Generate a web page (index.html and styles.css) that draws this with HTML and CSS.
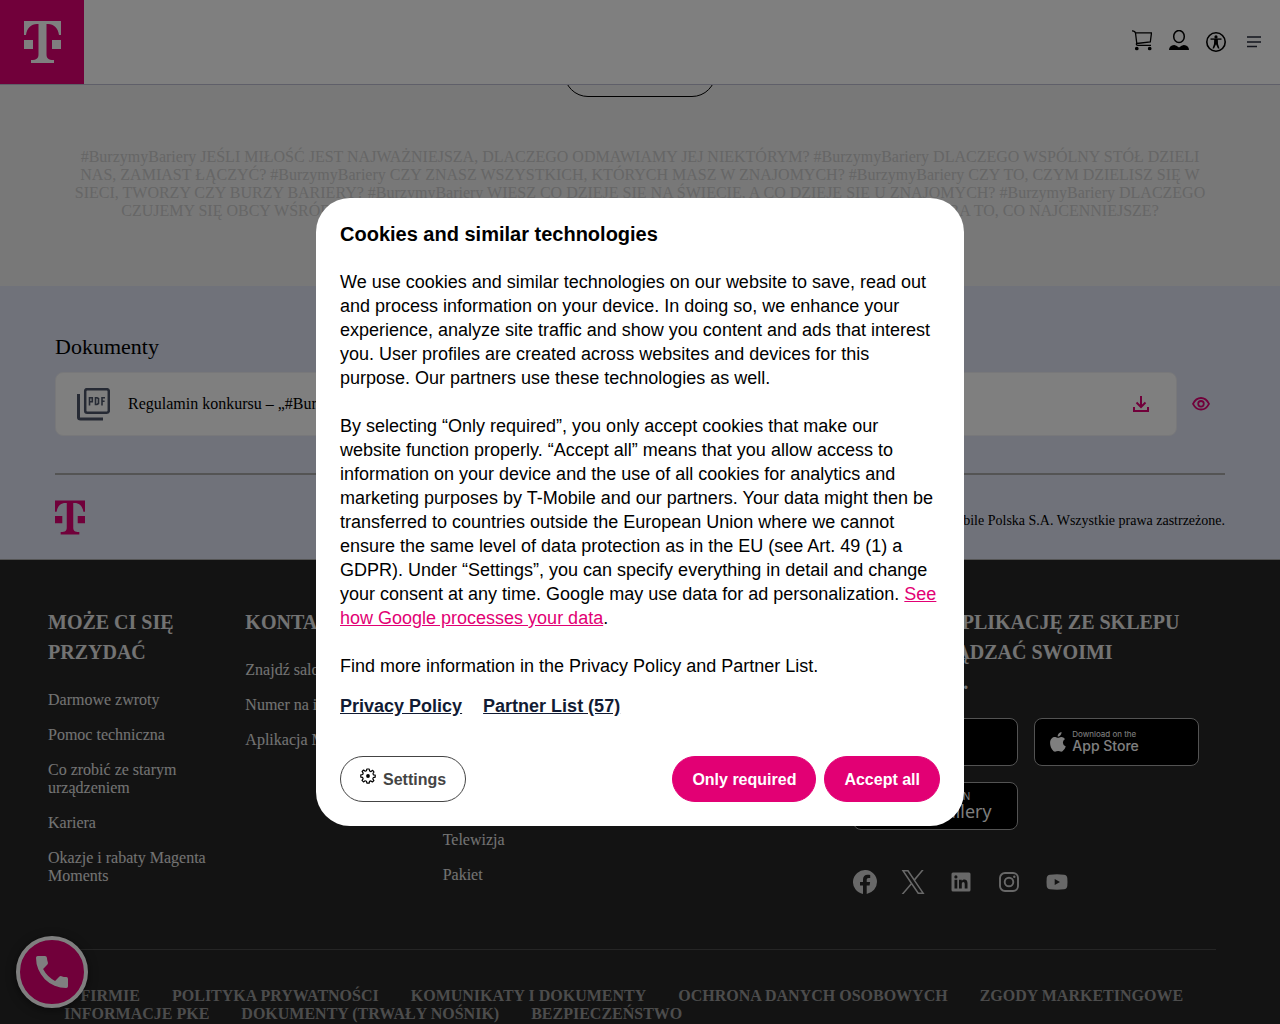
FILE: index.html
```
<!DOCTYPE html>
<html lang="pl">
<head>
<meta charset="utf-8">
<meta name="viewport" content="width=device-width, initial-scale=1">
<title>Burzymy Bariery | T-Mobile</title>
<link rel="stylesheet" href="styles.css">
</head>
<body>
<svg class="sprite" aria-hidden="true">
  <symbol id="t-logo" viewBox="0 0 37 42">
    <path d="M0 0H37V14H35C34 7 30 3 24 3H22.500V33C22.500 37 24 39 30 39V42H7V39C13 39 14.500 37 14.500 33V3H13C7 3 3 7 2 14H0ZM0 19H9V28H0ZM28 19H37V28H28Z"/>
  </symbol>
</svg>

<header class="header">
  <a class="brand" href="#" aria-label="T-Mobile"><svg class="brand-logo"><use href="#t-logo"/></svg></a>
  <nav class="tools" aria-label="Menu">
    <a class="tool" href="#" aria-label="Koszyk">
      <svg width="20" height="24" viewBox="0 0 20 24" fill="none" stroke="#000" stroke-width="1.300"><path d="M0 .9Q3 .8 3.500 3L4.800 13.500M3.400 2.900H19.500L18.300 12L4.700 13.500M4.500 13.500Q4 15.300 6 15.300H19"/><circle cx="4.800" cy="18.500" r="1.200" fill="#000"/><circle cx="17.700" cy="18.500" r="1.200" fill="#000"/></svg>
    </a>
    <a class="tool" href="#" aria-label="Konto">
      <svg width="20" height="24" viewBox="0 0 20 24"><ellipse cx="10" cy="6.500" rx="5.300" ry="6" fill="none" stroke="#000" stroke-width="1.500"/><path d="M0 20C0 17 2 15.300 5 15Q7 14.800 10 17.500Q13 14.800 15 15C18 15.300 20 17 20 20Z"/></svg>
    </a>
    <a class="tool" href="#" aria-label="Dostępność">
      <svg width="20" height="20" viewBox="0 0 20 20"><circle cx="10" cy="10" r="9.200" fill="none" stroke="#000" stroke-width="1.600"/><circle cx="10" cy="4.900" r="1.600"/><path d="M4.500 7.100H15.500" stroke="#000" stroke-width="1.400"/><path d="M8.200 7H11.800L12 12L13.500 16.500H12L10 12.300L8 16.500H6.500L8 12Z"/></svg>
    </a>
    <button class="tool tool-menu" type="button" aria-label="Otwórz menu">
      <svg width="14" height="12" viewBox="0 0 14 12" fill="none" stroke="#262a3a" stroke-width="1.600"><path d="M0 1H14M0 6H14M0 10.500H10"/></svg>
    </button>
  </nav>
</header>

<main>
  <section class="campaign">
    <a class="campaign-button" href="#">Dowiedz się</a>
    <p class="campaign-text">#BurzymyBariery JEŚLI MIŁOŚĆ JEST NAJWAŻNIEJSZA, DLACZEGO ODMAWIAMY JEJ NIEKTÓRYM? #BurzymyBariery DLACZEGO WSPÓLNY STÓŁ DZIELI NAS, ZAMIAST ŁĄCZYĆ? #BurzymyBariery CZY ZNASZ WSZYSTKICH, KTÓRYCH MASZ W ZNAJOMYCH? #BurzymyBariery CZY TO, CZYM DZIELISZ SIĘ W SIECI, TWORZY CZY BURZY BARIERY? #BurzymyBariery WIESZ CO DZIEJE SIĘ NA ŚWIECIE, A CO DZIEJE SIĘ U ZNAJOMYCH? #BurzymyBariery DLACZEGO CZUJEMY SIĘ OBCY WŚRÓD SWOICH? #BurzymyBariery DLACZEGO CODZIENNY POŚPIECH CZĘSTO NAM ZABIERA TO, CO NAJCENNIEJSZE?</p>
  </section>

  <section class="docs">
    <h2 class="docs-title">Dokumenty</h2>
    <div class="doc-row">
      <a class="doc" href="#">
        <svg width="33" height="33" viewBox="0 0 33 33" fill="none" stroke="#4c5468"><rect x="8.200" y="1.200" width="23.600" height="23.600" rx="2" stroke-width="2.500"/><path d="M1.500 6V29.500Q1.500 31 3.500 31H26" stroke-width="3"/><path d="M12.500 17.500V9.800H15.300V13.800H12.500M18.500 9.800V16.500H20L21.500 15.500V10.500L20 9.800ZM25 17.500V9.800H28M25 13.300H27.600" stroke-width="1.600"/></svg>
        <span class="doc-name">Regulamin konkursu – „#BurzymyBariery”</span>
        <svg width="16" height="16" viewBox="0 0 16 16" fill="none" stroke="#e20074" stroke-width="2"><path d="M8 0V10M3.500 6.500L8 11L12.500 6.500M1 11V15H15V11"/></svg>
      </a>
      <a class="doc-preview" href="#" aria-label="Podgląd">
        <svg width="18" height="14" viewBox="0 0 18 14" fill="none" stroke="#e20074" stroke-width="1.800"><path d="M1 6.800Q4 1 9 1T17 6.800Q14 12.500 9 12.500T1 6.800Z"/><circle cx="9" cy="6.800" r="2.800"/></svg>
      </a>
    </div>
    <div class="docs-foot">
      <svg class="docs-logo" role="img" aria-label="T-Mobile"><use href="#t-logo"/></svg>
      <span class="copyright">© T-Mobile Polska S.A. Wszystkie prawa zastrzeżone.</span>
    </div>
  </section>
</main>

<footer class="footer">
  <div class="footer-grid">
    <section>
      <h3 class="footer-title">MOŻE CI SIĘ PRZYDAĆ</h3>
      <ul class="footer-links">
        <li><a href="#">Darmowe zwroty</a></li>
        <li><a href="#">Pomoc techniczna</a></li>
        <li><a href="#">Co zrobić ze starym urządzeniem</a></li>
        <li><a href="#">Kariera</a></li>
        <li><a href="#">Okazje i rabaty Magenta Moments</a></li>
      </ul>
    </section>
    <section>
      <h3 class="footer-title">KONTAKT</h3>
      <ul class="footer-links">
        <li><a href="#">Znajdź salon</a></li>
        <li><a href="#">Numer na infolinię</a></li>
        <li><a href="#">Aplikacja Mój T-Mobile</a></li>
      </ul>
    </section>
    <section>
      <h3 class="footer-title">OFERTA DLA CIEBIE</h3>
      <ul class="footer-links">
        <li><a href="#">Abonament</a></li>
        <li><a href="#">Na kartę</a></li>
        <li><a href="#">Internet</a></li>
        <li><a href="#">Urządzenia</a></li>
        <li><a href="#">Telewizja</a></li>
        <li><a href="#">Pakiet</a></li>
      </ul>
    </section>
    <section class="apps">
      <h3 class="footer-title apps-title">POBIERZ APLIKACJĘ ZE SKLEPU ABY ZARZĄDZAĆ SWOIMI USŁUGAMI.</h3>
      <div class="stores">
        <a class="store store-google" href="#">
          <svg width="18" height="20" viewBox="0 0 18 20" fill="#fff"><path d="M1 0L18 10L1 20Z"/></svg>
          <span class="store-text"><small>GET IT ON</small><b>Google Play</b></span>
        </a>
        <a class="store" href="#">
          <svg width="16" height="20" viewBox="0 0 16 20" fill="#fff"><path d="M11.500 0C11.700 2.500 9.800 4.700 7.700 4.600C7.500 2.300 9.500.2 11.500 0ZM15 7Q12.700 8.500 12.900 10.800Q13 13.500 15.800 14.500Q14.500 18 12.500 19.300Q11.300 20 9.800 19.300Q8.200 18.600 6.500 19.300Q4.800 20 3.600 19.200C1 17 .1 13.500.1 11C.1 5.800 4 4.400 6 5.200Q8 6 8.700 5.800Q12.500 3.900 15 7Z"/></svg>
          <span class="store-text"><small>Download on the</small><b>App Store</b></span>
        </a>
        <a class="store store-huawei" href="#">
          <svg width="20" height="24" viewBox="0 0 20 24"><rect y="2" width="20" height="20" rx="5" fill="#e20074"/><path d="M6 8Q10 14 14 8" fill="none" stroke="#fff"/></svg>
          <span class="store-text"><small>EXPLORE IT ON</small><b>AppGallery</b></span>
        </a>
      </div>
      <div class="social">
        <a href="#" aria-label="Facebook"><svg viewBox="0 0 24 24"><path d="M24 12a12 12 0 1 0-14 11.900V15.500H7V12h3V9.400c0-3 1.800-4.700 4.500-4.700 1.300 0 2.700.2 2.700.2v3h-1.500c-1.500 0-2 .9-2 1.900V12h3.400l-.5 3.500h-2.900v8.400A12 12 0 0 0 24 12Z"/></svg></a>
        <a href="#" aria-label="X"><svg viewBox="0 0 24 24"><path d="M14.200 10.200 22.700 0h-2L13.300 8.800 7.400 0H.6l9 13.400L.6 24h2l7.900-9.300L16.800 24h6.800ZM3.400 1.500h3.100l14.300 21h-3.100Z"/></svg></a>
        <a href="#" aria-label="LinkedIn"><svg viewBox="0 0 24 24"><path d="M4 2.500H20Q21.500 2.500 21.500 4V20Q21.500 21.500 20 21.500H4Q2.500 21.500 2.500 20V4Q2.500 2.500 4 2.500ZM5.500 9.700V18.500H8.300V9.700ZM6.900 5.300A1.600 1.600 0 1 0 6.900 8.500A1.600 1.600 0 1 0 6.900 5.300ZM10 9.700V18.500H12.800V14C12.800 11.300 15.700 11.300 15.700 14V18.500H18.500V13C18.500 9 14.400 8.600 12.800 10.900V9.700Z" fill-rule="evenodd"/></svg></a>
        <a href="#" aria-label="Instagram"><svg viewBox="0 0 24 24"><rect x="3" y="3" width="18" height="18" rx="5" fill="none" stroke="currentColor" stroke-width="1.900"/><circle cx="12" cy="12" r="4.300" fill="none" stroke="currentColor" stroke-width="1.900"/><circle cx="17.300" cy="6.800" r="1.200"/></svg></a>
        <a href="#" aria-label="YouTube"><svg viewBox="0 0 24 24"><path d="M5 4.700Q12 4 19 4.700Q22 5 22.300 8Q22.700 12 22.300 16Q22 19 19 19.300Q12 20 5 19.300Q2 19 1.700 16Q1.300 12 1.700 8Q2 5 5 4.700ZM9.700 9V15L15 12Z" fill-rule="evenodd"/></svg></a>
      </div>
    </section>
  </div>
  <nav class="legal" aria-label="Informacje">
    <a href="#">O FIRMIE</a>
    <a href="#">POLITYKA PRYWATNOŚCI</a>
    <a href="#">KOMUNIKATY I DOKUMENTY</a>
    <a href="#">OCHRONA DANYCH OSOBOWYCH</a>
    <a href="#">ZGODY MARKETINGOWE</a>
    <a href="#">INFORMACJE PKE</a>
    <a href="#">DOKUMENTY (TRWAŁY NOŚNIK)</a>
    <a href="#">BEZPIECZEŃSTWO</a>
  </nav>
</footer>

<button class="call" type="button" aria-label="Zadzwoń">
  <svg width="32" height="32" viewBox="0 0 32 32" fill="#fff"><path d="M1.800 0H9Q10.700 0 10.900 1.700Q11.100 4.500 11.900 6.500Q12.200 7.800 11.200 8.800L7.100 13Q11.300 21 19.100 24.900L23.200 20.800Q24.200 19.800 25.500 20.200Q27.700 21 30.300 21.100Q32 21.300 32 23V30.200Q32 32 30.200 32A30.200 30.200 0 0 1 0 1.800Q0 0 1.800 0Z"/></svg>
</button>

<div class="overlay">
  <div class="dialog" role="dialog" aria-modal="true" aria-labelledby="consent-title" lang="en">
    <h1 class="dialog-title" id="consent-title">Cookies and similar technologies</h1>
    <p>We use cookies and similar technologies on our website to save, read out and process information on your device. In doing so, we enhance your experience, analyze site traffic and show you content and ads that interest you. User profiles are created across websites and devices for this purpose. Our partners use these technologies as well.</p>
    <p>By selecting “Only required”, you only accept cookies that make our website function properly. “Accept all” means that you allow access to information on your device and the use of all cookies for analytics and marketing purposes by T-Mobile and our partners. Your data might then be transferred to countries outside the European Union where we cannot ensure the same level of data protection as in the EU (see Art. 49 (1) a GDPR). Under “Settings”, you can specify everything in detail and change your consent at any time. Google may use data for ad personalization. <a class="inline-link" href="#">See how Google processes your data</a>.</p>
    <p>Find more information in the Privacy Policy and Partner List.</p>
    <div class="dialog-links">
      <a href="#">Privacy Policy</a>
      <a href="#">Partner List (57)</a>
    </div>
    <div class="actions">
      <button class="btn btn-outline" type="button">
        <svg width="16" height="16" viewBox="0 0 16 16"><path d="M6.800 1H9.200L9.600 3L11 3.600L12.700 2.300L14 4L13 5.400L13.400 6.800L15.200 7V9.200L13.300 9.600L12.800 10.900L13.900 12.500L12.400 14L10.900 12.900L9.500 13.400L9.200 15.200H6.900L6.500 13.300L5.100 12.800L3.500 13.900L2 12.400L3.100 10.800L2.600 9.400L.8 9.100V6.900L2.700 6.500L3.200 5.100L2.100 3.500L3.600 2L5.200 3.200L6.500 2.700Z" fill="none" stroke="#000" stroke-width="1.200" stroke-linejoin="round"/><circle cx="8" cy="8" r="1.900"/></svg>
        Settings
      </button>
      <button class="btn btn-primary" type="button">Only required</button>
      <button class="btn btn-primary" type="button">Accept all</button>
    </div>
  </div>
</div>
</body>
</html>
```
FILE: styles.css
```
* { box-sizing: border-box; }

body {
  margin: 0;
  font: 16px/18px "Liberation Serif", "Times New Roman", serif;
  color: #000;
  background: #262626;
}

h1, h2, h3, p, ul { margin: 0; padding: 0; }
a { color: inherit; text-decoration: none; }
svg { display: block; flex: none; }
button { font: inherit; cursor: pointer; }

.sprite { position: absolute; width: 0; height: 0; }

/* Header */
.header {
  position: sticky;
  top: 0;
  z-index: 2;
  display: flex;
  justify-content: space-between;
  align-items: center;
  padding-right: 19px;
  background: #fff;
  border-bottom: 1px solid #bfbfd2;
}
.brand {
  display: grid;
  place-items: center;
  width: 84px;
  height: 84px;
  background: #e20074;
}
.brand-logo { width: 37px; height: 42px; fill: #fff; }
.tools { display: flex; align-items: center; gap: 17px; }
.tool { display: block; padding: 0; border: 0; background: none; }
.tool-menu { padding-left: 4px; }

/* Campaign */
.campaign {
  padding: 0 70px 66px;
  background: #f1f1f1;
  text-align: center;
}
.campaign-button {
  display: block;
  width: 152px;
  margin: -36px auto 51px;
  padding: 14px 16px;
  border: 1px solid #000;
  border-radius: 24px;
}
.campaign-text { color: #ccc; }

/* Documents */
.docs {
  padding: 48px 55px 24px;
  background: #e0e5f5;
  border-bottom: 1px solid #aaa;
}
.docs-title { font-size: 22px; line-height: 26px; font-weight: 400; }
.doc-row {
  display: flex;
  align-items: center;
  padding: 12px 0 37px;
  border-bottom: 2px solid #a8a8a8;
}
.doc {
  flex: 1;
  display: flex;
  align-items: center;
  gap: 18px;
  height: 64px;
  padding: 0 27px 0 21px;
  border: 1px solid #f0f0f4;
  border-radius: 8px;
  background: #fff;
}
.doc-name { flex: 1; }
.doc-preview { padding: 0 15px; }
.docs-foot {
  display: flex;
  justify-content: space-between;
  align-items: center;
  padding-top: 25px;
}
.docs-logo { width: 30px; height: 35px; fill: #e20074; }
.copyright { padding-top: 6px; font-size: 14px; line-height: 18px; }

/* Footer */
.footer { padding: 47px 48px 0; background: #262626; color: #e6e6e6; }
.footer-grid {
  display: grid;
  grid-template-columns: repeat(6, 1fr);
}
.footer-title { padding-right: 16px; font-size: 20px; line-height: 30px; font-weight: 700; }
.footer-links {
  display: grid;
  gap: 17px;
  padding: 24px 32px 0 0;
  list-style: none;
}
.apps { grid-column: 5 / span 2; padding-left: 16px; }
.stores {
  display: grid;
  grid-template-columns: 165px 165px;
  gap: 16px;
  padding-top: 21px;
}
.store {
  display: flex;
  align-items: center;
  gap: 6px;
  height: 48px;
  padding: 0 15px;
  border: 1px solid #a6a6a6;
  border-radius: 8px;
  background: #000;
  color: #fff;
  font-family: Inter, "Liberation Sans", sans-serif;
}
.store-text { display: grid; }
.store-text small { font-size: 8px; line-height: 8px; }
.store-text b { font-size: 14px; line-height: 16px; font-weight: 500; }
.store-google { padding: 0 10px; }
.store-google b { font-size: 12px; }
.store-huawei { gap: 10px; font-family: "Open Sans", sans-serif; }
.store-huawei small { font-size: 10px; line-height: 10px; }
.store-huawei b { font-size: 18px; line-height: 20px; }
.social { display: flex; gap: 24px; padding-top: 40px; color: #d0d0d0; }
.social svg { width: 24px; height: 24px; fill: currentColor; }
.legal {
  display: flex;
  flex-wrap: wrap;
  column-gap: 32px;
  margin: 55px 16px 0;
  padding-top: 37px;
  border-top: 1px solid #4a4a4a;
  color: #999;
  font-weight: 700;
}

/* Call button */
.call {
  position: fixed;
  left: 16px;
  bottom: 16px;
  z-index: 3;
  display: grid;
  place-items: center;
  width: 72px;
  height: 72px;
  padding: 0;
  border: 4px solid #fff;
  border-radius: 50%;
  background: #e20074;
  box-shadow: 0 2px 10px rgba(0, 0, 0, .5);
}

/* Consent dialog */
.overlay {
  position: fixed;
  inset: 0;
  z-index: 10;
  display: grid;
  place-items: center;
  background: rgba(0, 0, 0, .5);
}
.dialog {
  display: flex;
  flex-direction: column;
  gap: 24px;
  width: 648px;
  max-width: 100%;
  padding: 24px;
  border-radius: 34px;
  background: #fff;
  font: 18px/24px "Liberation Sans", Arial, sans-serif;
}
.dialog-title { font-size: 20px; line-height: 24px; }
.inline-link { color: #e20074; text-decoration: underline; }
.dialog-links {
  display: flex;
  gap: 21px;
  margin: -8px 0 14px;
  color: #121b33;
  font-weight: 700;
}
.dialog-links a { text-decoration: underline; }
.actions { display: flex; gap: 8px; }
.btn {
  display: flex;
  align-items: center;
  gap: 7px;
  padding: 11px 19px 9px;
  border: 1px solid #e20074;
  border-radius: 24px;
  font-size: 16px;
  line-height: 24px;
  font-weight: 700;
}
.btn svg { align-self: flex-start; }
.btn-primary { background: #e20074; color: #fff; }
.btn-outline { margin-right: auto; background: #fff; border-color: #444; color: #444; }
```
